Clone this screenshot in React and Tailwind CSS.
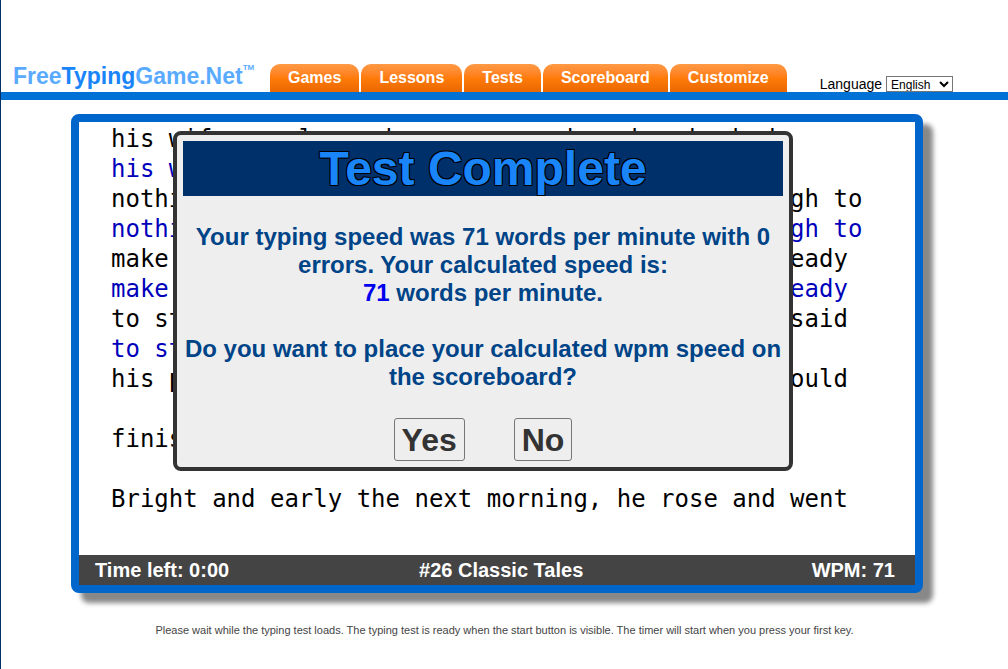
import React from "react";

const tabs = ["Games", "Lessons", "Tests", "Scoreboard", "Customize"];

const lines = [
  {
    text: "his wife ran lower because moved on her he had",
    typed: "his wife ran lower because moved on her",
  },
  {
    text: "nothing left in the home save just leather enough to",
    typed: "nothing left in the home save just leather enough to",
  },
  {
    text: "make one last pair of shoes. He cut them out, ready",
    typed: "make one last pair of shoes. He cut them out, ready",
  },
  {
    text: "to stitch the leather and went to bed after he said",
    typed: "to stitch the leather",
  },
  { text: "his prayers, and was sure that by tomorrow he would" },
  { text: "finish the shoes." },
  { text: "Bright and early the next morning, he rose and went" },
];

function Header() {
  return (
    <header className="flex h-[100px] items-end border-b-8 border-[#0072d6]">
      <a
        href="#"
        className="ml-3 flex w-[257px] items-start text-[23px] leading-8 font-bold text-[#5aabff]"
      >
        <span>
          Free<span className="text-[#1a85f8]">Typing</span>Game.Net
        </span>
        <span className="pt-[2px] text-[8px] leading-3">TM</span>
      </a>
      <nav className="flex gap-[2px]">
        {tabs.map((tab) => (
          <a
            key={tab}
            href="#"
            className="h-7 rounded-t-[10px] bg-linear-to-b from-[#ff9a45] via-[#ff7b0a] to-[#e96800] px-[18px] text-base leading-7 font-bold text-white"
          >
            {tab}
          </a>
        ))}
      </nav>
      <div className="ml-[33px] flex items-end gap-1">
        <label htmlFor="language" className="text-sm leading-4">
          Language
        </label>
        <select
          id="language"
          className="h-4 w-[67px] border border-[#767676] bg-white text-xs leading-3"
        >
          <option>English</option>
        </select>
      </div>
    </header>
  );
}

function ResultDialog() {
  return (
    <div
      role="dialog"
      aria-labelledby="result-title"
      className="absolute top-[9px] left-[94px] w-[620px] rounded-lg border-4 border-[#333] bg-[#eee] p-[6px] text-center text-2xl leading-7 font-bold text-[#004488]"
    >
      <h1
        id="result-title"
        className="bg-[#003069] text-5xl leading-[55px] text-[#1a85f8] [text-shadow:-1px_-1px_0_#000,1px_-1px_0_#000,-1px_1px_0_#000,1px_1px_0_#000]"
      >
        Test Complete
      </h1>
      <p className="mt-[27px]">
        Your typing speed was 71 words per minute with 0 errors. Your
        calculated speed is:
        <br />
        <span className="text-[#0000ee]">71</span> words per minute.
      </p>
      <p className="mt-7">
        Do you want to place your calculated wpm speed on the scoreboard?
      </p>
      <div className="mt-[27px] flex justify-center gap-[49px] text-[32px] leading-10 text-[#333]">
        <button className="h-[43px] rounded-[3px] border border-[#767676] px-[7px]">
          Yes
        </button>
        <button className="h-[43px] rounded-[3px] border border-[#767676] px-[7px]">
          No
        </button>
      </div>
    </div>
  );
}

function TypingTest() {
  return (
    <main className="relative w-[852px] rounded-lg border-8 border-[#0066cc] bg-white shadow-[10px_10px_5px_#888]">
      <div className="h-[433px] overflow-hidden pt-[2px] pl-8 font-['DejaVu_Sans_Mono',monospace] text-2xl leading-[30px] whitespace-pre">
        {lines.map((line) => (
          <div key={line.text} className="h-[60px]">
            <p>{line.text}</p>
            {line.typed && <p className="text-[#0000bb]">{line.typed}</p>}
          </div>
        ))}
      </div>
      <div className="grid grid-cols-[35%_31%_34%] bg-[#444] text-xl leading-[30px] font-bold text-white">
        <span className="pl-4">Time left: 0:00</span>
        <span className="text-center">#26 Classic Tales</span>
        <span className="pr-5 text-right">WPM: 71</span>
      </div>
      <ResultDialog />
    </main>
  );
}

function App() {
  return (
    <div className="min-h-screen border-l border-[#003069] bg-white font-['Liberation_Sans',Arial,sans-serif] text-black">
      <Header />
      <div className="mt-[14px] flex justify-center pr-[15px]">
        <TypingTest />
      </div>
      <p className="mt-[29px] text-center text-[11px] leading-4 text-[#444]">
        Please wait while the typing test loads. The typing test is ready when
        the start button is visible. The timer will start when you press your
        first key.
      </p>
    </div>
  );
}

export default App;
